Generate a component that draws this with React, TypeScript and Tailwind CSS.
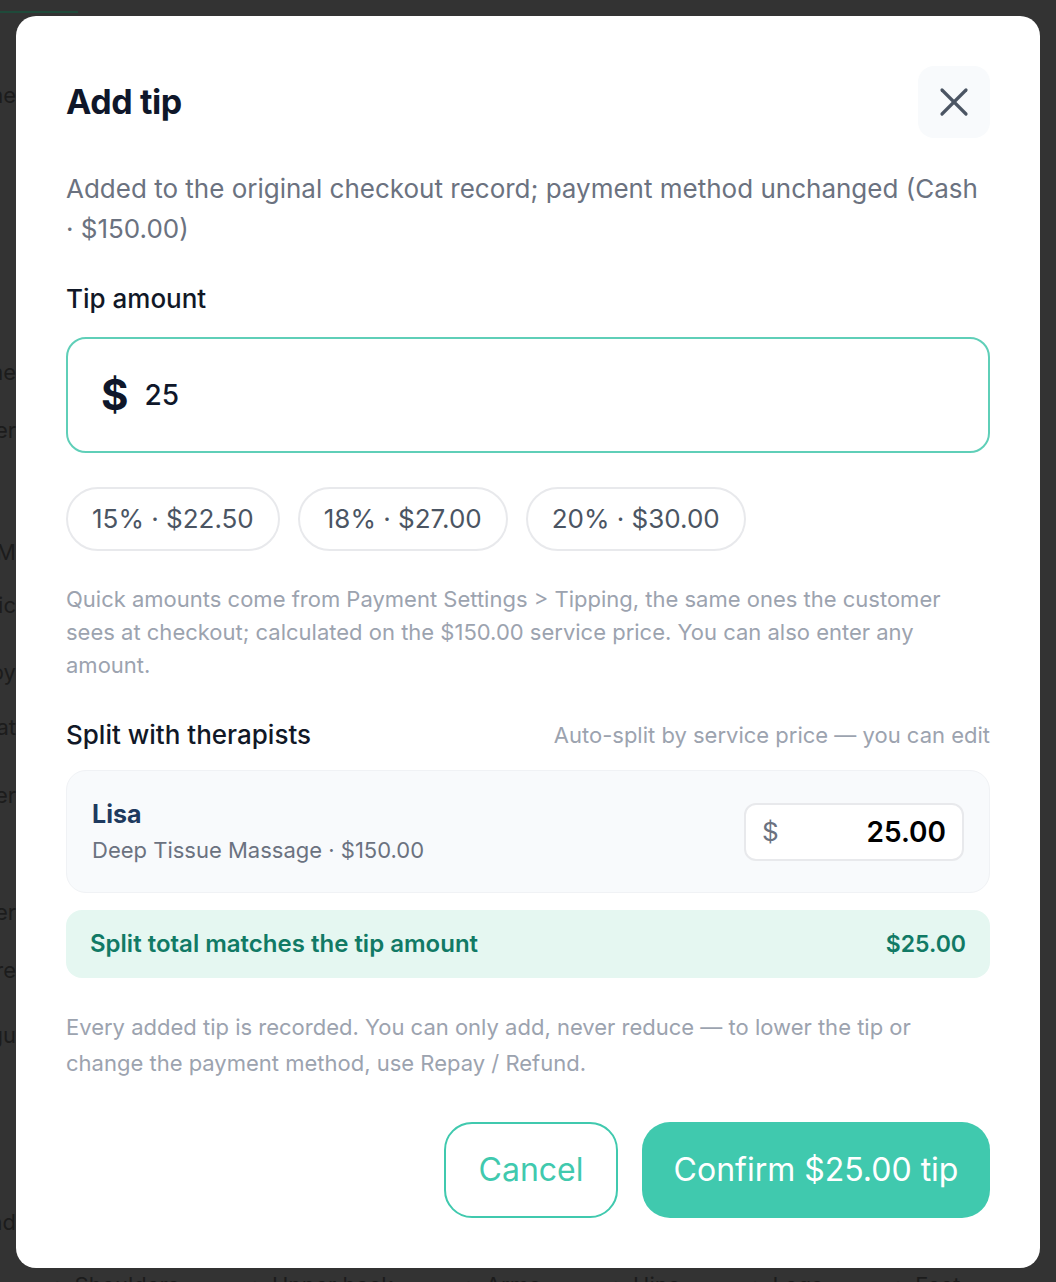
import { X } from 'lucide-react';

const sideFragments: { text: string; mt: number }[] = [
  { text: 'Scheme', mt: 80 },
  { text: 'Theme', mt: 251 },
  { text: 'Partner', mt: 32 },
  { text: 'Name M', mt: 96 },
  { text: 'Classic', mt: 27 },
  { text: 'Nearby', mt: 41 },
  { text: 'Stat', mt: 29 },
  { text: 'Other', mt: 42 },
  { text: 'Center', mt: 91 },
  { text: 'Store', mt: 32 },
  { text: 'Regu', mt: 39 },
  { text: 'Kind', mt: 161 },
];

const bodyParts = ['Shoulders', 'Upper back', 'Arms', 'Hips', 'Legs', 'Feet'];

const presets = ['15% · $22.50', '18% · $27.00', '20% · $30.00'];

export default function App() {
  return (
    <div className="relative h-[1282px] w-[1056px] overflow-hidden bg-[#333333] font-['Inter',sans-serif]">
      {/* page underneath the backdrop */}
      <div className="h-[2px] w-[78px] translate-y-[11px] bg-[#1f4a3a]" />
      <div className="flex w-[16px] flex-col items-end overflow-visible">
        {sideFragments.map((f) => (
          <div
            key={f.text}
            style={{ marginTop: f.mt }}
            className="whitespace-nowrap text-[22px] leading-[26px] text-[#1c1c1c]"
          >
            {f.text}
          </div>
        ))}
      </div>
      <div className="absolute left-0 top-[1272px] flex gap-[68px] pl-[50px] text-[22px] leading-[26px] text-[#1c1c1c]">
        {bodyParts.map((p) => (
          <span key={p} className="flex gap-[10px] whitespace-nowrap">
            <span>+</span>
            {p}
          </span>
        ))}
      </div>

      {/* modal */}
      <div className="absolute left-[16px] top-[16px] flex h-[1252px] w-[1024px] flex-col rounded-[20px] bg-white px-[50px] pt-[50px]">
        <div className="flex items-center justify-between">
          <h2 className="text-[34px] font-bold leading-[40px] tracking-[-0.4px] text-[#0f172a]">Add tip</h2>
          <button className="flex h-[72px] w-[72px] items-center justify-center rounded-[16px] bg-[#f8fafc] text-[#4b5563]">
            <X size={48} strokeWidth={1.6} />
          </button>
        </div>

        <p className="mt-[31px] text-[26px] leading-[40px] text-[#6b7280]">
          Added to the original checkout record; payment method unchanged (Cash · $150.00)
        </p>

        <div className="mt-[34px] text-[26px] font-medium leading-[32px] text-[#111827]">Tip amount</div>

        <div className="mt-[22px] flex h-[116px] items-center gap-[16px] rounded-[20px] border-2 border-[#5fcfb8] px-[33px]">
          <span className="text-[42px] font-bold leading-none text-[#0f172a]">$</span>
          <span className="text-[28px] font-medium leading-none text-[#0f172a]">25</span>
        </div>

        <div className="mt-[34px] flex gap-[18px]">
          {presets.map((p) => (
            <button
              key={p}
              className="h-[64px] rounded-full border-2 border-[#e8e9ec] px-[24px] text-[26px] leading-none text-[#4b5563]"
            >
              {p}
            </button>
          ))}
        </div>

        <p className="mt-[32px] max-w-[890px] text-[22px] leading-[33px] text-[#9ca3af]">
          Quick amounts come from Payment Settings &gt; Tipping, the same ones the customer sees at checkout;
          calculated on the $150.00 service price. You can also enter any amount.
        </p>

        <div className="mt-[37px] flex items-center justify-between">
          <span className="text-[26px] font-medium leading-[32px] text-[#111827]">Split with therapists</span>
          <span className="text-[22px] leading-[32px] text-[#9ca3af]">Auto-split by service price — you can edit</span>
        </div>

        <div className="mt-[19px] flex h-[123px] items-center justify-between rounded-[20px] border border-[#f0f2f5] bg-[#f8fafc] pl-[25px] pr-[25px]">
          <div className="flex flex-col">
            <span className="text-[25px] font-bold leading-[32px] text-[#1e3a5f]">Lisa</span>
            <span className="mt-[5px] text-[22px] leading-[30px] text-[#6b7280]">Deep Tissue Massage · $150.00</span>
          </div>
          <div className="flex h-[58px] w-[220px] items-center justify-between rounded-[12px] border-2 border-[#e8e9ec] bg-white pl-[16px] pr-[16px]">
            <span className="text-[26px] leading-none text-[#6b7280]">$</span>
            <span className="text-[28px] font-semibold leading-none text-black">25.00</span>
          </div>
        </div>

        <div className="mt-[17px] flex h-[68px] items-center justify-between rounded-[16px] bg-[#e5f7f1] px-[24px]">
          <span className="text-[24px] font-semibold text-[#117a65]">Split total matches the tip amount</span>
          <span className="text-[23px] font-semibold text-[#117a65]">$25.00</span>
        </div>

        <p className="mt-[31px] max-w-[870px] text-[22px] leading-[36px] text-[#9ca3af]">
          Every added tip is recorded. You can only add, never reduce — to lower the tip or change the payment
          method, use Repay / Refund.
        </p>

        <div className="mt-[41px] flex justify-end gap-[24px]">
          <button className="h-[96px] w-[174px] rounded-[28px] border-2 border-[#40c9ae] text-[32px] text-[#40c9ae]">
            Cancel
          </button>
          <button className="h-[96px] w-[348px] rounded-[28px] bg-[#40c9ae] text-[32px] text-white">
            Confirm $25.00 tip
          </button>
        </div>
      </div>
    </div>
  );
}
